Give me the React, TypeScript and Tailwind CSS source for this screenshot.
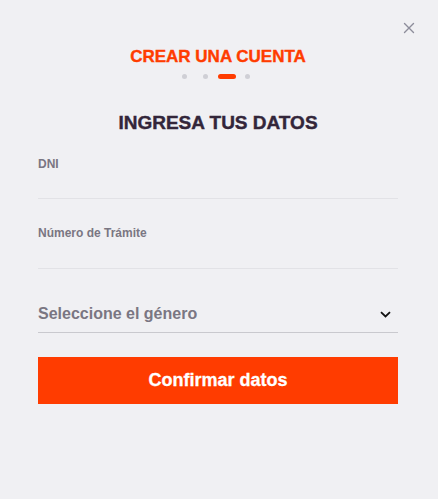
import React from "react";

export default function App() {
  const font = { fontFamily: '"Liberation Sans", Arial, sans-serif' };
  return (
    <div
      className="relative w-full h-[499px] bg-[#f0f0f3] font-['Liberation_Sans',Arial,sans-serif]"
      style={font}
    >
      <button className="absolute left-[403px] top-[22px] w-[12px] h-[12px] flex items-center justify-center">
        <svg width="12" height="12" viewBox="0 0 12 12" fill="none">
          <path d="M1.5 1.5L10.5 10.5M10.5 1.5L1.5 10.5" stroke="#8d8d9b" strokeWidth="1.4" strokeLinecap="round" />
        </svg>
      </button>

      <div className="flex flex-col pl-[38px] pr-[40px] pt-[47px]">
        <h2 className="text-center text-[17px] leading-[20px] font-bold text-[#ff3c00] [-webkit-text-stroke:0.4px_#ff3c00]">
          CREAR UNA CUENTA
        </h2>
        <div className="flex justify-center items-center mt-[7px] pr-[4px]">
          <span className="w-[5px] h-[5px] rounded-full bg-[#cfcfd5] mr-[16px]" />
          <span className="w-[5px] h-[5px] rounded-full bg-[#cfcfd5] mr-[10px]" />
          <span className="w-[18px] h-[5px] rounded-full bg-[#ff3c00] mr-[9px]" />
          <span className="w-[5px] h-[5px] rounded-full bg-[#cfcfd5]" />
        </div>

        <h1 className="mt-[32px] text-center text-[19px] leading-[24px] font-bold text-[#33263a] [-webkit-text-stroke:0.4px_#33263a]">
          INGRESA TUS DATOS
        </h1>

        <div className="mt-[21px] flex flex-col">
          <label className="text-[12px] leading-[16px] font-bold text-[#7a7682]">DNI</label>
          <div className="h-[27px] border-b border-[#e2e2e6]" />
        </div>

        <div className="mt-[26px] flex flex-col">
          <label className="text-[12px] leading-[16px] font-bold text-[#7a7682]">Número de Trámite</label>
          <div className="h-[28px] border-b border-[#e2e2e6]" />
        </div>

        <div className="mt-[35px] flex items-start justify-between border-b border-[#c9c9ce] h-[29px]">
          <span className="text-[16px] leading-[20px] font-bold text-[#7a7682]">Seleccione el género</span>
          <svg className="mt-[7px] mr-[7px]" width="11" height="7" viewBox="0 0 11 7" fill="none">
            <path d="M1 1.2L5.5 5.5L10 1.2" stroke="#111111" strokeWidth="1.8" />
          </svg>
        </div>

        <button className="mt-[24px] h-[47px] w-full bg-[#ff3c00] text-white text-[18px] font-bold flex items-center justify-center [-webkit-text-stroke:0.3px_#ffffff]">
          Confirmar datos
        </button>
      </div>
    </div>
  );
}
